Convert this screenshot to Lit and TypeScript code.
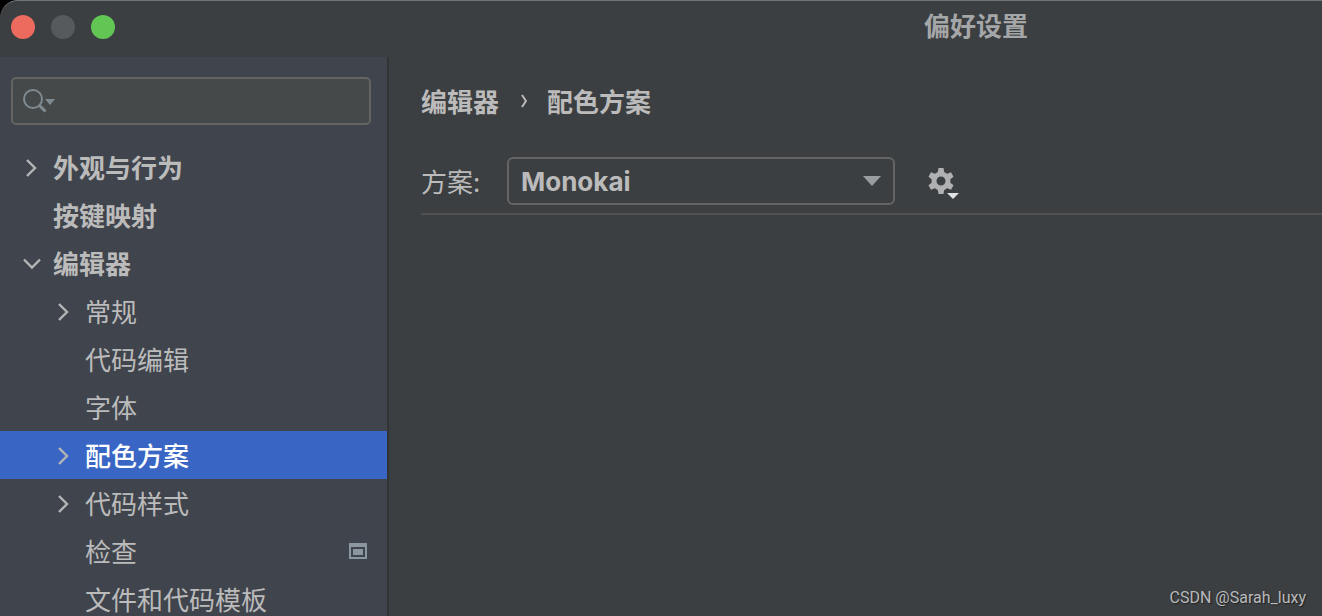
import { LitElement, html, css, svg, nothing } from "lit";
import { customElement, state } from "lit/decorators.js";
import { classMap } from "lit/directives/class-map.js";

interface TreeItem {
  label: string;
  level: 0 | 1;
  arrow?: "right" | "down";
  badge?: boolean;
}

const ITEMS: TreeItem[] = [
  { label: "外观与行为", level: 0, arrow: "right" },
  { label: "按键映射", level: 0 },
  { label: "编辑器", level: 0, arrow: "down" },
  { label: "常规", level: 1, arrow: "right" },
  { label: "代码编辑", level: 1 },
  { label: "字体", level: 1 },
  { label: "配色方案", level: 1, arrow: "right" },
  { label: "代码样式", level: 1, arrow: "right" },
  { label: "检查", level: 1, badge: true },
  { label: "文件和代码模板", level: 1 },
];

const ARROWS = {
  right: svg`<path d="M8 5 16 13 8 21" />`,
  down: svg`<path d="M5 8.500 13 16.500 21 8.500" />`,
};

@customElement("settings-tree")
export class SettingsTree extends LitElement {
  @state() private selected = "配色方案";

  static styles = css`
    :host {
      display: block;
    }
    .list {
      list-style: none;
      margin: 0;
      padding: 0;
    }
    .row {
      display: flex;
      align-items: center;
      gap: 10px;
      box-sizing: border-box;
      width: 100%;
      height: 48px;
      padding: 0 20px 0 19px;
      border: 0;
      background: none;
      color: #bbbbbb;
      font: inherit;
      line-height: 48px;
      text-align: left;
      white-space: nowrap;
    }
    .row.top {
      font-weight: 700;
    }
    .row.nested {
      padding-left: 51px;
    }
    .row.selected {
      background: #3966c4;
      color: #ffffff;
      font-weight: 500;
    }
    .arrow {
      flex: none;
      width: 24px;
      height: 24px;
      fill: none;
      stroke: #b3b5b7;
      stroke-width: 2.4;
    }
    .label {
      flex: 1;
    }
    .badge {
      flex: none;
      width: 18px;
      height: 16px;
    }
  `;

  render() {
    return html`<ul class="list">
      ${ITEMS.map(
        (item) => html`<li>
          <button
            type="button"
            class=${classMap({
              row: true,
              top: item.level === 0,
              nested: item.level === 1,
              selected: item.label === this.selected,
            })}
            @click=${() => (this.selected = item.label)}
          >
            <svg class="arrow" viewBox="0 0 24 24" aria-hidden="true">
              ${item.arrow ? ARROWS[item.arrow] : nothing}
            </svg>
            <span class="label">${item.label}</span>
            ${item.badge
              ? html`<svg class="badge" viewBox="0 0 18 16" aria-hidden="true">
                  <path fill="#8b979f" fill-rule="evenodd" d="M0 0H18V16H0ZM2 4V14H16V4Z" />
                  <path fill="#8b979f" d="M4 6H14V12H4Z" />
                </svg>`
              : nothing}
          </button>
        </li>`,
      )}
    </ul>`;
  }
}

@customElement("app-root")
export class AppRoot extends LitElement {
  static styles = css`
    :host {
      display: block;
      height: 100vh;
      overflow: hidden;
      background: #000000;
      color: #bbbbbb;
      font: 26px "Noto Sans CJK SC", sans-serif;
    }
    .window {
      position: relative;
      display: grid;
      grid-template-rows: 57px minmax(0, 1fr);
      box-sizing: border-box;
      height: 100%;
      background: #3c3f41;
      border-top-left-radius: 18px;
      overflow: hidden;
    }
    .titlebar {
      display: flex;
      align-items: center;
      justify-content: space-between;
      box-sizing: border-box;
      padding: 0 294px 8px 11px;
      border-top: 1px solid #6f7678;
      border-top-left-radius: 18px;
    }
    .lights {
      display: flex;
      gap: 16px;
      padding-top: 4px;
    }
    .light {
      width: 24px;
      height: 24px;
      padding: 0;
      border: 0;
      border-radius: 50%;
    }
    .close {
      background: #ed6a5e;
    }
    .minimize {
      background: #575a5c;
    }
    .zoom {
      background: #62c655;
    }
    .title {
      margin: 0;
      color: #a5a6a8;
      font-size: 26px;
      line-height: 48px;
    }
    .body {
      display: grid;
      grid-template-columns: 389px minmax(0, 1fr);
      min-height: 0;
    }
    .sidebar {
      min-height: 0;
      overflow: hidden;
      background: #40444c;
      border-right: 2px solid #323334;
    }
    .search {
      display: flex;
      align-items: center;
      box-sizing: border-box;
      height: 48px;
      margin: 20px 16px 18px 11px;
      padding: 0 10px;
      gap: 8px;
      border: 2px solid #646464;
      border-radius: 5px;
      background: #45494a;
    }
    .search-icon {
      flex: none;
      width: 32px;
      height: 26px;
    }
    .search-input {
      flex: 1;
      min-width: 0;
      padding: 0;
      border: 0;
      outline: 0;
      background: none;
      color: inherit;
      font: inherit;
      line-height: 40px;
    }
    .content {
      min-width: 0;
      padding: 20px 0 0 32px;
    }
    .crumbs {
      display: flex;
      align-items: center;
      height: 48px;
      gap: 20px;
      font-weight: 700;
    }
    .crumb {
      color: inherit;
      text-decoration: none;
      line-height: 48px;
    }
    .crumb-arrow {
      width: 8px;
      height: 14px;
      fill: none;
      stroke: #bbbbbb;
      stroke-width: 2;
    }
    .scheme {
      display: flex;
      align-items: center;
      padding: 32px 0 8px;
      border-bottom: 2px solid #515151;
    }
    .scheme-label {
      width: 86px;
      line-height: 48px;
    }
    .combo {
      display: grid;
      align-items: center;
      width: 388px;
    }
    .select,
    .combo-arrow {
      grid-area: 1 / 1;
    }
    .select {
      appearance: none;
      box-sizing: border-box;
      width: 100%;
      height: 48px;
      padding: 0 40px 0 12px;
      border: 2px solid #646464;
      border-radius: 6px;
      background: #3c3f41;
      color: #bbbbbb;
      font: 700 26px "Inter", "Noto Sans CJK SC", sans-serif;
    }
    .combo-arrow {
      justify-self: end;
      width: 18px;
      height: 10px;
      margin-right: 14px;
      pointer-events: none;
    }
    .gear {
      width: 32px;
      height: 36px;
      margin-left: 33px;
      padding: 0;
      border: 0;
      background: none;
    }
    .gear-icon {
      display: block;
      width: 32px;
      height: 36px;
    }
    .watermark {
      position: absolute;
      right: 16px;
      bottom: 8px;
      color: #b8babb;
      font: 16px/20px "Roboto", sans-serif;
      text-shadow: 1px 1px 1px #202224;
    }
  `;

  render() {
    return html`<div class="window">
      <header class="titlebar">
        <div class="lights">
          <button class="light close" type="button" aria-label="关闭"></button>
          <button class="light minimize" type="button" aria-label="最小化"></button>
          <button class="light zoom" type="button" aria-label="缩放"></button>
        </div>
        <h1 class="title">偏好设置</h1>
      </header>
      <div class="body">
        <aside class="sidebar">
          <label class="search">
            <svg class="search-icon" viewBox="0 0 32 26" aria-hidden="true">
              <circle cx="10" cy="11" r="9" fill="none" stroke="#7f8b91" stroke-width="2" />
              <path d="M16 17 22.500 23.500" stroke="#7f8b91" stroke-width="3" />
              <path d="M22 11H32L27 17Z" fill="#7f8b91" />
            </svg>
            <input class="search-input" type="text" aria-label="搜索" />
          </label>
          <settings-tree></settings-tree>
        </aside>
        <main class="content">
          <nav class="crumbs">
            <a class="crumb" href="#editor">编辑器</a>
            <svg class="crumb-arrow" viewBox="0 0 8 14" aria-hidden="true">
              <path d="M3 1 7 7 3 13" />
            </svg>
            <a class="crumb" href="#scheme">配色方案</a>
          </nav>
          <div class="scheme">
            <label class="scheme-label" for="scheme">方案:</label>
            <div class="combo">
              <select class="select" id="scheme">
                <option>Monokai</option>
              </select>
              <svg class="combo-arrow" viewBox="0 0 18 10" aria-hidden="true">
                <path d="M0 0H18L9 10Z" fill="#9a9da0" />
              </svg>
            </div>
            <button class="gear" type="button" aria-label="方案操作">
              <svg class="gear-icon" viewBox="0 0 32 36" aria-hidden="true">
                <circle cx="13" cy="18" r="7" fill="none" stroke="#afb1b3" stroke-width="5" />
                <g fill="#afb1b3">
                  ${[0, 60, 120, 180, 240, 300].map(
                    (angle) =>
                      svg`<path d="M10.500 5H15.500L16.500 11H9.500Z" transform="rotate(${angle} 13 18)" />`,
                  )}
                </g>
                <path d="M19 30H31L25 36Z" fill="#dfe1e2" />
              </svg>
            </button>
          </div>
        </main>
      </div>
      <div class="watermark">CSDN @Sarah_luxy</div>
    </div>`;
  }
}
